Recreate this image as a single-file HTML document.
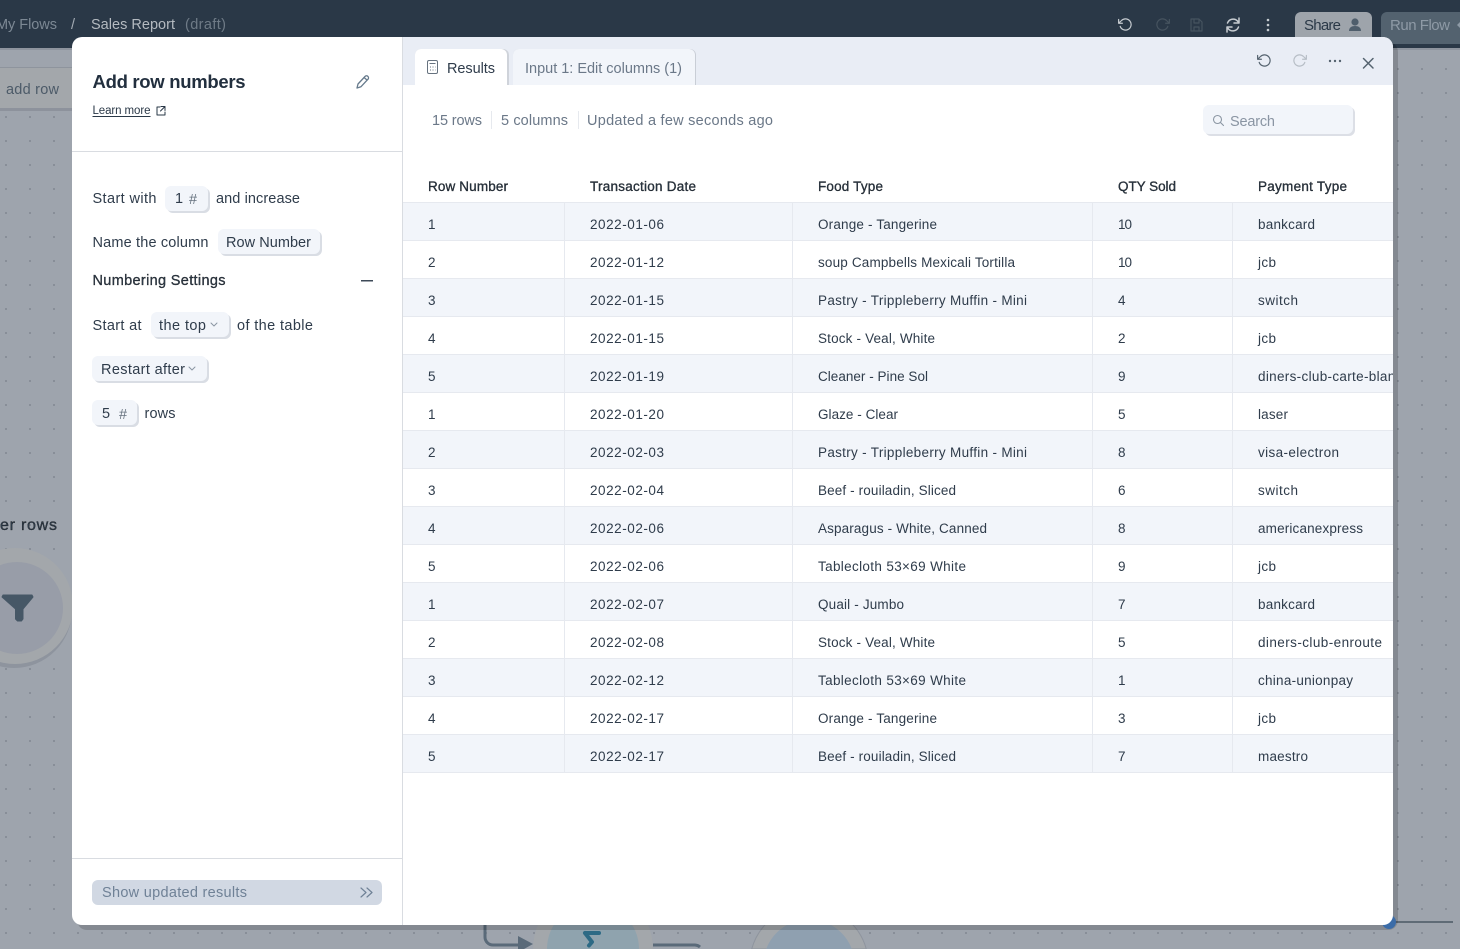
<!DOCTYPE html>
<html><head><meta charset="utf-8"><title>Add row numbers</title>
<style>
html,body{margin:0;padding:0;width:1460px;height:949px;overflow:hidden;background:#9ea4ad}
svg{display:block;overflow:hidden;font-family:"Liberation Sans",sans-serif}
.ic{fill:none;stroke-linecap:round;stroke-linejoin:round}
.m{stroke:currentColor;stroke-width:.25px}
</style></head><body>
<svg width="1460" height="949" viewBox="0 0 1460 949" xmlns="http://www.w3.org/2000/svg">
<defs>
<pattern id="dots" x="0" y="0" width="24" height="24" patternUnits="userSpaceOnUse" patternTransform="translate(5 20)"><rect x="0" y="0" width="2" height="2" fill="#888e98"/></pattern>
<clipPath id="modal"><rect x="403" y="37" width="990" height="888"/></clipPath>
<symbol id="undo" viewBox="0 0 24 24"><path d="M1 4v6h6M3.5 15a9 9 0 1 0 2.100-9.400L1 10" fill="none" stroke="currentColor" stroke-width="1.900" stroke-linecap="round" stroke-linejoin="round"/></symbol>
<symbol id="redo" viewBox="0 0 24 24"><path d="M23 4v6h-6M20.500 15a9 9 0 1 1-2.100-9.400L23 10" fill="none" stroke="currentColor" stroke-width="1.900" stroke-linecap="round" stroke-linejoin="round"/></symbol>
</defs>

<rect width="1460" height="949" fill="#9ea4ad"/>
<rect width="1460" height="901" y="48" fill="url(#dots)"/>

<!-- background nodes -->
<rect x="0" y="48" width="72" height="60" fill="#9ea4ad"/>
<rect x="0" y="67" width="72" height="1" fill="#8e949d"/>
<rect x="0" y="68" width="72" height="40" fill="#a3a7ab"/>
<rect x="0" y="108" width="72" height="3" fill="#8d929c"/>
<text x="6" y="94" font-size="14.500" fill="#4c5a68" textLength="53">add row</text>
<text x="0" y="530" font-size="16" fill="#2f3d4c" class="m" textLength="57">er rows</text>
<circle cx="14" cy="610" r="58" fill="#8e949e"/>
<circle cx="15" cy="606" r="58" fill="#a3a7ab"/>
<circle cx="17" cy="608" r="46" fill="#989da8"/>
<path d="M3 595h29l1 2-10 12v10l-1.500 2h-4l-2-2v-10L2 597z" fill="#465766" stroke="#465766" stroke-linejoin="round"/>
<path d="M533 949a60 60 0 0 1 120 0z" fill="#a3a7ab"/>
<path d="M547 949a46 46 0 0 1 92 0z" fill="#8fa3ae"/>
<path d="M585 933h14M585 933l7 9-3 3.500" fill="none" stroke="#2d6a85" stroke-width="4" stroke-linecap="round" stroke-linejoin="round"/>
<path d="M751.700 949A59.500 59.500 0 0 1 866.300 949z" fill="#a3a7ab" stroke="#8e949e" stroke-width="1"/>
<path d="M766.200 949A45.700 45.700 0 0 1 851.800 949z" fill="#8fa0b0"/>
<path d="M485 925v12a8 8 0 0 0 8 8h26" fill="none" stroke="#5a6a79" stroke-width="3"/>
<path d="M518 936l15 8-9 5h-6z" fill="#5a6a79"/>
<path d="M653 945h42a8 8 0 0 1 5 2" fill="none" stroke="#5a6a79" stroke-width="3"/>
<rect x="1393" y="921" width="60" height="2" fill="#5f6b76"/>

<!-- top bar -->
<rect width="1460" height="48" fill="#2a3847"/>
<rect y="48" width="1460" height="2" fill="#8e949e"/>
<g font-size="14.500">
<text x="-4" y="29" fill="#7c8894" textLength="61">My Flows</text>
<text x="71" y="29" fill="#a3abb3">/</text>
<text x="91" y="29" fill="#b4bac0" textLength="84">Sales Report</text>
<text x="185" y="29" fill="#6f7b87" textLength="41">(draft)</text>
</g>
<use href="#undo" x="1118" y="17" width="15" height="15" color="#c7ccd1"/>
<use href="#redo" x="1155" y="17" width="15" height="15" color="#46535f"/>
<path d="M1191 19h8l3 3v9h-11zM1194 19v4h5v-4M1194 31v-4h5v4" fill="none" stroke="#46535f" stroke-width="1.200" stroke-linejoin="round"/>
<g class="ic" stroke="#c7ccd1" stroke-width="1.500"><path d="M1239 18v5h-5M1227 32v-5h5M1227.500 23a6 6 0 0 1 10-2l1.500 2M1238.500 27a6 6 0 0 1-10 2l-1.500-2"/></g>
<g fill="#c7ccd1"><circle cx="1268" cy="20" r="1.300"/><circle cx="1268" cy="25" r="1.300"/><circle cx="1268" cy="30" r="1.300"/></g>
<rect x="1295" y="12" width="77" height="32" rx="6" fill="#9ea4ab"/>
<text x="1304" y="30" font-size="15" fill="#2a3847" textLength="37">Share</text>
<circle cx="1355" cy="22" r="3.600" fill="#4f5e6c"/>
<path d="M1349 31c0-3.500 2.500-5 6-5s6 1.500 6 5z" fill="#4f5e6c"/>
<path d="M1387 12h73v32h-73a6 6 0 0 1-6-6v-20a6 6 0 0 1 6-6z" fill="#53626f"/>
<text x="1390" y="30" font-size="15" fill="#8e9aa6" textLength="60">Run Flow</text>
<path d="M1457 25l3-3v6z" fill="#8e9aa6"/>

<!-- modal -->
<rect x="77" y="42" width="1321" height="888" rx="10" fill="#000" fill-opacity=".16"/>
<circle cx="1389" cy="922" r="7" fill="#3b6ca8"/>
<rect x="72" y="37" width="1321" height="888" rx="10" fill="#ffffff"/>
<path d="M403 37h980a10 10 0 0 1 10 10v38H403z" fill="#e9edf5"/>
<rect x="402" y="37" width="1" height="888" fill="#d9dce1"/>
<rect x="72" y="151" width="330" height="1" fill="#d9dce1"/>
<rect x="72" y="858" width="330" height="1" fill="#d9dce1"/>

<!-- left panel -->
<text x="92.500" y="88" font-size="18.500" font-weight="700" fill="#222f3e" textLength="153">Add row numbers</text>
<g class="ic" stroke="#667a8c" stroke-width="1.300"><path d="M357 88l1-4 7-7.500a1.800 1.800 0 0 1 3 2.700l-7 7.500zM364 77.500l3 2.500"/></g>
<text x="92.500" y="114" font-size="11.500" fill="#2a3847" textLength="58">Learn more</text>
<rect x="92.500" y="116" width="58" height="1" fill="#2a3847"/>
<g class="ic" stroke="#2a3847" stroke-width="1"><path d="M160 107h-3v8h8v-3M161 106.500h4v4M165 106.500l-4.500 4.500"/></g>

<g fill="#f2f5fa" stroke="none">
<rect x="167" y="188" width="43" height="25" rx="6" fill="#d9dde4"/><rect x="165" y="186" width="43" height="25" rx="6"/>
<rect x="220" y="231" width="102" height="25" rx="6" fill="#d9dde4"/><rect x="218" y="229" width="102" height="25" rx="6"/>
<rect x="153" y="314" width="78" height="25" rx="6" fill="#d9dde4"/><rect x="151" y="312" width="78" height="25" rx="6"/>
<rect x="94" y="358" width="115" height="25" rx="6" fill="#d9dde4"/><rect x="92" y="356" width="115" height="25" rx="6"/>
<rect x="94" y="402" width="45" height="25" rx="6" fill="#d9dde4"/><rect x="92" y="400" width="45" height="25" rx="6"/>
</g>
<g font-size="14.500" fill="#2f3c4b">
<text x="92.500" y="203" textLength="64">Start with</text>
<text x="175" y="203">1</text>
<text x="189" y="204" fill="#66727f">#</text>
<text x="216" y="203" textLength="84">and increase</text>
<text x="92.500" y="247" textLength="116">Name the column</text>
<text x="226" y="247" textLength="85">Row Number</text>
<text x="92.500" y="285" class="m" textLength="133">Numbering Settings</text>
<text x="92.500" y="330" textLength="49">Start at</text>
<text x="159" y="330" textLength="47">the top</text>
<text x="237" y="330" textLength="76">of the table</text>
<text x="101" y="374" textLength="84">Restart after</text>
<text x="102" y="418">5</text>
<text x="119" y="419" fill="#66727f">#</text>
<text x="144.500" y="418" textLength="31">rows</text>
</g>
<rect x="361" y="280" width="12" height="1.500" fill="#3d4a58"/>
<g class="ic" stroke="#8b96a3" stroke-width="1"><path d="M211 323l3 3 3-3M189 367l3 3 3-3"/></g>
<rect x="92" y="880" width="290" height="25" rx="6" fill="#d1d8e3"/>
<text x="102" y="897" font-size="14.500" fill="#6f8196" textLength="145">Show updated results</text>
<g class="ic" stroke="#6f8196" stroke-width="1.200"><path d="M361 888l5 4.500-5 4.500M367 888l5 4.500-5 4.500"/></g>

<!-- tabs -->
<path d="M415 85V55a6 6 0 0 1 6-6h82a6 6 0 0 1 6 6v30z" fill="#cfd3da"/>
<path d="M415 85V55a6 6 0 0 1 6-6h80a6 6 0 0 1 6 6v30z" fill="#fff"/>
<path d="M513 85V55a6 6 0 0 1 6-6h171a6 6 0 0 1 6 6v30z" fill="#c9ced6"/>
<path d="M513 85V55a6 6 0 0 1 6-6h170a6 6 0 0 1 6 6v30z" fill="#f2f5fa"/>
<g fill="none" stroke="#66727f" stroke-width="1"><rect x="427.500" y="60.500" width="10" height="13" rx="1.500"/><path d="M429.500 63.500h6"/></g>
<path d="M430 67h1M432.500 67h1M435 67h.5M430 70h1M432.500 70h1M435 70h.5" stroke="#66727f" stroke-width="1"/>
<text x="447" y="73" font-size="14.500" fill="#2f3c4b" textLength="48">Results</text>
<text x="525" y="73" font-size="14.500" fill="#6b7888" textLength="157">Input 1: Edit columns (1)</text>
<use href="#undo" x="1257" y="53" width="15" height="15" color="#55636f"/>
<use href="#redo" x="1292" y="53" width="15" height="15" color="#b7bec6"/>
<g fill="#55636f"><circle cx="1330" cy="61" r="1.200"/><circle cx="1335" cy="61" r="1.200"/><circle cx="1340" cy="61" r="1.200"/></g>
<path d="M1363.500 58.500l9.500 9.500M1373 58.500l-9.500 9.500" stroke="#55636f" stroke-width="1.500" stroke-linecap="round"/>

<!-- stats -->
<g font-size="14.500" fill="#6b7888">
<text x="432" y="125" textLength="50">15 rows</text>
<text x="501" y="125" textLength="67">5 columns</text>
<text x="587" y="125" textLength="186">Updated a few seconds ago</text>
</g>
<rect x="491" y="111" width="1" height="18" fill="#e6e9ee"/>
<rect x="578" y="111" width="1" height="18" fill="#e6e9ee"/>
<rect x="1205" y="107" width="150" height="29" rx="6" fill="#dcdfe6"/>
<rect x="1203" y="105" width="150" height="29" rx="6" fill="#f2f5fa"/>
<g class="ic" stroke="#8b96a3" stroke-width="1.100"><circle cx="1217.500" cy="119.500" r="4"/><path d="M1220.500 122.500l3 3"/></g>
<text x="1230" y="126" font-size="14.500" fill="#8a95a3" textLength="45">Search</text>

<!-- table backgrounds -->
<g fill="#f2f5fa">
<rect x="403" y="203" width="990" height="37"/><rect x="403" y="279" width="990" height="37"/><rect x="403" y="355" width="990" height="37"/><rect x="403" y="431" width="990" height="37"/><rect x="403" y="507" width="990" height="37"/><rect x="403" y="583" width="990" height="37"/><rect x="403" y="659" width="990" height="37"/><rect x="403" y="735" width="990" height="37"/>
</g>
<g fill="#e6e9ef">
<rect x="403" y="202" width="990" height="1"/><rect x="403" y="240" width="990" height="1"/><rect x="403" y="278" width="990" height="1"/><rect x="403" y="316" width="990" height="1"/><rect x="403" y="354" width="990" height="1"/><rect x="403" y="392" width="990" height="1"/><rect x="403" y="430" width="990" height="1"/><rect x="403" y="468" width="990" height="1"/><rect x="403" y="506" width="990" height="1"/><rect x="403" y="544" width="990" height="1"/><rect x="403" y="582" width="990" height="1"/><rect x="403" y="620" width="990" height="1"/><rect x="403" y="658" width="990" height="1"/><rect x="403" y="696" width="990" height="1"/><rect x="403" y="734" width="990" height="1"/><rect x="403" y="772" width="990" height="1"/>
<rect x="564" y="203" width="1" height="570"/><rect x="792" y="203" width="1" height="570"/><rect x="1092" y="203" width="1" height="570"/><rect x="1232" y="203" width="1" height="570"/>
</g>

<!-- table text -->
<g font-size="13.500" fill="#2a3847" class="m">
<text x="428" y="191" textLength="80">Row Number</text>
<text x="590" y="191" textLength="106">Transaction Date</text>
<text x="818" y="191" textLength="65">Food Type</text>
<text x="1118" y="191" textLength="58">QTY Sold</text>
<text x="1258" y="191" textLength="89">Payment Type</text>
</g>
<g font-size="13.500" fill="#2f3c4b" clip-path="url(#modal)">
<text x="428" y="229">1</text><text x="590" y="229" textLength="74">2022-01-06</text><text x="818" y="229" textLength="119">Orange - Tangerine</text><text x="1118" y="229" textLength="14">10</text><text x="1258" y="229" textLength="57">bankcard</text>
<text x="428" y="267">2</text><text x="590" y="267" textLength="74">2022-01-12</text><text x="818" y="267" textLength="197">soup Campbells Mexicali Tortilla</text><text x="1118" y="267" textLength="14">10</text><text x="1258" y="267" textLength="18">jcb</text>
<text x="428" y="305">3</text><text x="590" y="305" textLength="74">2022-01-15</text><text x="818" y="305" textLength="209">Pastry - Trippleberry Muffin - Mini</text><text x="1118" y="305">4</text><text x="1258" y="305" textLength="40">switch</text>
<text x="428" y="343">4</text><text x="590" y="343" textLength="74">2022-01-15</text><text x="818" y="343" textLength="117">Stock - Veal, White</text><text x="1118" y="343">2</text><text x="1258" y="343" textLength="18">jcb</text>
<text x="428" y="381">5</text><text x="590" y="381" textLength="74">2022-01-19</text><text x="818" y="381" textLength="110">Cleaner - Pine Sol</text><text x="1118" y="381">9</text><text x="1258" y="381" textLength="160">diners-club-carte-blanche</text>
<text x="428" y="419">1</text><text x="590" y="419" textLength="74">2022-01-20</text><text x="818" y="419" textLength="80">Glaze - Clear</text><text x="1118" y="419">5</text><text x="1258" y="419" textLength="30">laser</text>
<text x="428" y="457">2</text><text x="590" y="457" textLength="74">2022-02-03</text><text x="818" y="457" textLength="209">Pastry - Trippleberry Muffin - Mini</text><text x="1118" y="457">8</text><text x="1258" y="457" textLength="81">visa-electron</text>
<text x="428" y="495">3</text><text x="590" y="495" textLength="74">2022-02-04</text><text x="818" y="495" textLength="138">Beef - rouiladin, Sliced</text><text x="1118" y="495">6</text><text x="1258" y="495" textLength="40">switch</text>
<text x="428" y="533">4</text><text x="590" y="533" textLength="74">2022-02-06</text><text x="818" y="533" textLength="169">Asparagus - White, Canned</text><text x="1118" y="533">8</text><text x="1258" y="533" textLength="105">americanexpress</text>
<text x="428" y="571">5</text><text x="590" y="571" textLength="74">2022-02-06</text><text x="818" y="571" textLength="148">Tablecloth 53×69 White</text><text x="1118" y="571">9</text><text x="1258" y="571" textLength="18">jcb</text>
<text x="428" y="609">1</text><text x="590" y="609" textLength="74">2022-02-07</text><text x="818" y="609" textLength="86">Quail - Jumbo</text><text x="1118" y="609">7</text><text x="1258" y="609" textLength="57">bankcard</text>
<text x="428" y="647">2</text><text x="590" y="647" textLength="74">2022-02-08</text><text x="818" y="647" textLength="117">Stock - Veal, White</text><text x="1118" y="647">5</text><text x="1258" y="647" textLength="124">diners-club-enroute</text>
<text x="428" y="685">3</text><text x="590" y="685" textLength="74">2022-02-12</text><text x="818" y="685" textLength="148">Tablecloth 53×69 White</text><text x="1118" y="685">1</text><text x="1258" y="685" textLength="95">china-unionpay</text>
<text x="428" y="723">4</text><text x="590" y="723" textLength="74">2022-02-17</text><text x="818" y="723" textLength="119">Orange - Tangerine</text><text x="1118" y="723">3</text><text x="1258" y="723" textLength="18">jcb</text>
<text x="428" y="761">5</text><text x="590" y="761" textLength="74">2022-02-17</text><text x="818" y="761" textLength="138">Beef - rouiladin, Sliced</text><text x="1118" y="761">7</text><text x="1258" y="761" textLength="50">maestro</text>
</g>
</svg>
</body></html>
